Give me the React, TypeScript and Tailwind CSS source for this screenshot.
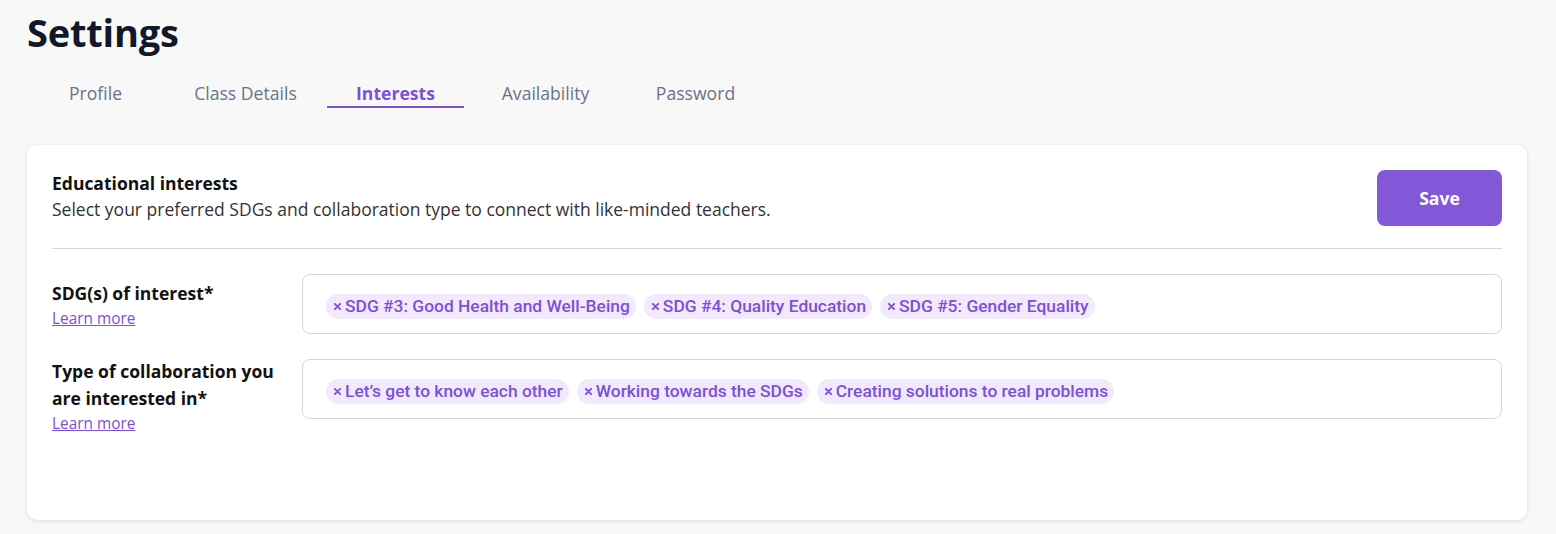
const tabs = ['Profile', 'Class Details', 'Interests', 'Availability', 'Password'];

const sdgs = ['SDG #3: Good Health and Well-Being', 'SDG #4: Quality Education', 'SDG #5: Gender Equality'];
const collabs = ["Let\u2019s get to know each other", 'Working towards the SDGs', 'Creating solutions to real problems'];

// small bold cross used on each chip
const Cross = () => (
  <svg viewBox="0 0 7 7" className="w-[7px] h-[7px] mr-[4px] shrink-0">
    <path d="M0.8 0.8 L6.2 6.2 M6.2 0.8 L0.8 6.2" stroke="currentColor" strokeWidth="1.8" strokeLinecap="round" />
  </svg>
);

const Chip = ({ label }: { label: string }) => (
  <span className="inline-flex items-center h-[25px] pl-[8px] pr-[6px] rounded-full bg-[#f3e9fd] text-[#7c50d8] text-[17.4px] font-medium font-['Roboto',sans-serif] whitespace-nowrap">
    <Cross />
    {label}
  </span>
);

const Row = ({ title, chips, labelClass }: { title: React.ReactNode; chips: string[]; labelClass: string }) => (
  <div className="flex items-start">
    <div className={`w-[250px] shrink-0 ${labelClass}`}>
      <div className="text-[17.5px] font-bold leading-[27px] text-[#111]">{title}</div>
      <a href="#" className="block mt-[2px] text-[15.4px] leading-[20px] text-[#7c50d8] underline">Learn more</a>
    </div>
    <div className="flex-1 h-[60px] border border-[#d6d4de] rounded-[8px] flex items-center gap-[8px] px-[23px] pt-[5px]">
      {chips.map((c) => (
        <Chip key={c} label={c} />
      ))}
    </div>
  </div>
);

const App = () => {
  return (
    <div className="w-full min-h-[534px] bg-[#f8f8f8] font-['Open_Sans',sans-serif] pl-[27px] pr-[29px] pt-[7px]">
      <h1 className="text-[38px] font-bold leading-[50px] text-[#111827] tracking-[-0.2px]">Settings</h1>

      <div className="flex gap-[13px] mt-[23px]">
        {tabs.map((t) => (
          <div
            key={t}
            className={
              t === 'Interests'
                ? 'w-[137px] text-center text-[17.6px] leading-[26px] font-bold text-[#7c50d8] border-b-2 border-[#7c50d8]'
                : 'w-[137px] text-center text-[17.6px] leading-[26px] text-[#697386] border-b-2 border-transparent'
            }
          >
            {t}
          </div>
        ))}
      </div>

      <div className="mt-[37px] h-[375px] bg-white rounded-[10px] shadow-[0_1px_4px_rgba(0,0,0,0.12)] px-[25px] pt-[25px]">
        <div className="flex justify-between items-start">
          <div>
            <div className="text-[17.5px] font-bold leading-[26px] text-[#111]">Educational interests</div>
            <div className="text-[17.5px] leading-[26px] text-[#333]">
              Select your preferred SDGs and collaboration type to connect with like-minded teachers.
            </div>
          </div>
          <button className="w-[125px] h-[56px] rounded-[8px] bg-[#8258d9] text-white text-[17.6px] font-bold">Save</button>
        </div>

        <div className="mt-[22px] border-t border-[#d6d4de]" />

        <div className="mt-[25px]">
          <Row title="SDG(s) of interest*" chips={sdgs} labelClass="pt-[6px]" />
          <div className="mt-[25px]">
            <Row
              title={
                <>
                  Type of collaboration you
                  <br />
                  are interested in*
                </>
              }
              chips={collabs}
              labelClass="-mt-[1px]"
            />
          </div>
        </div>
      </div>
    </div>
  );
};

export default App;
